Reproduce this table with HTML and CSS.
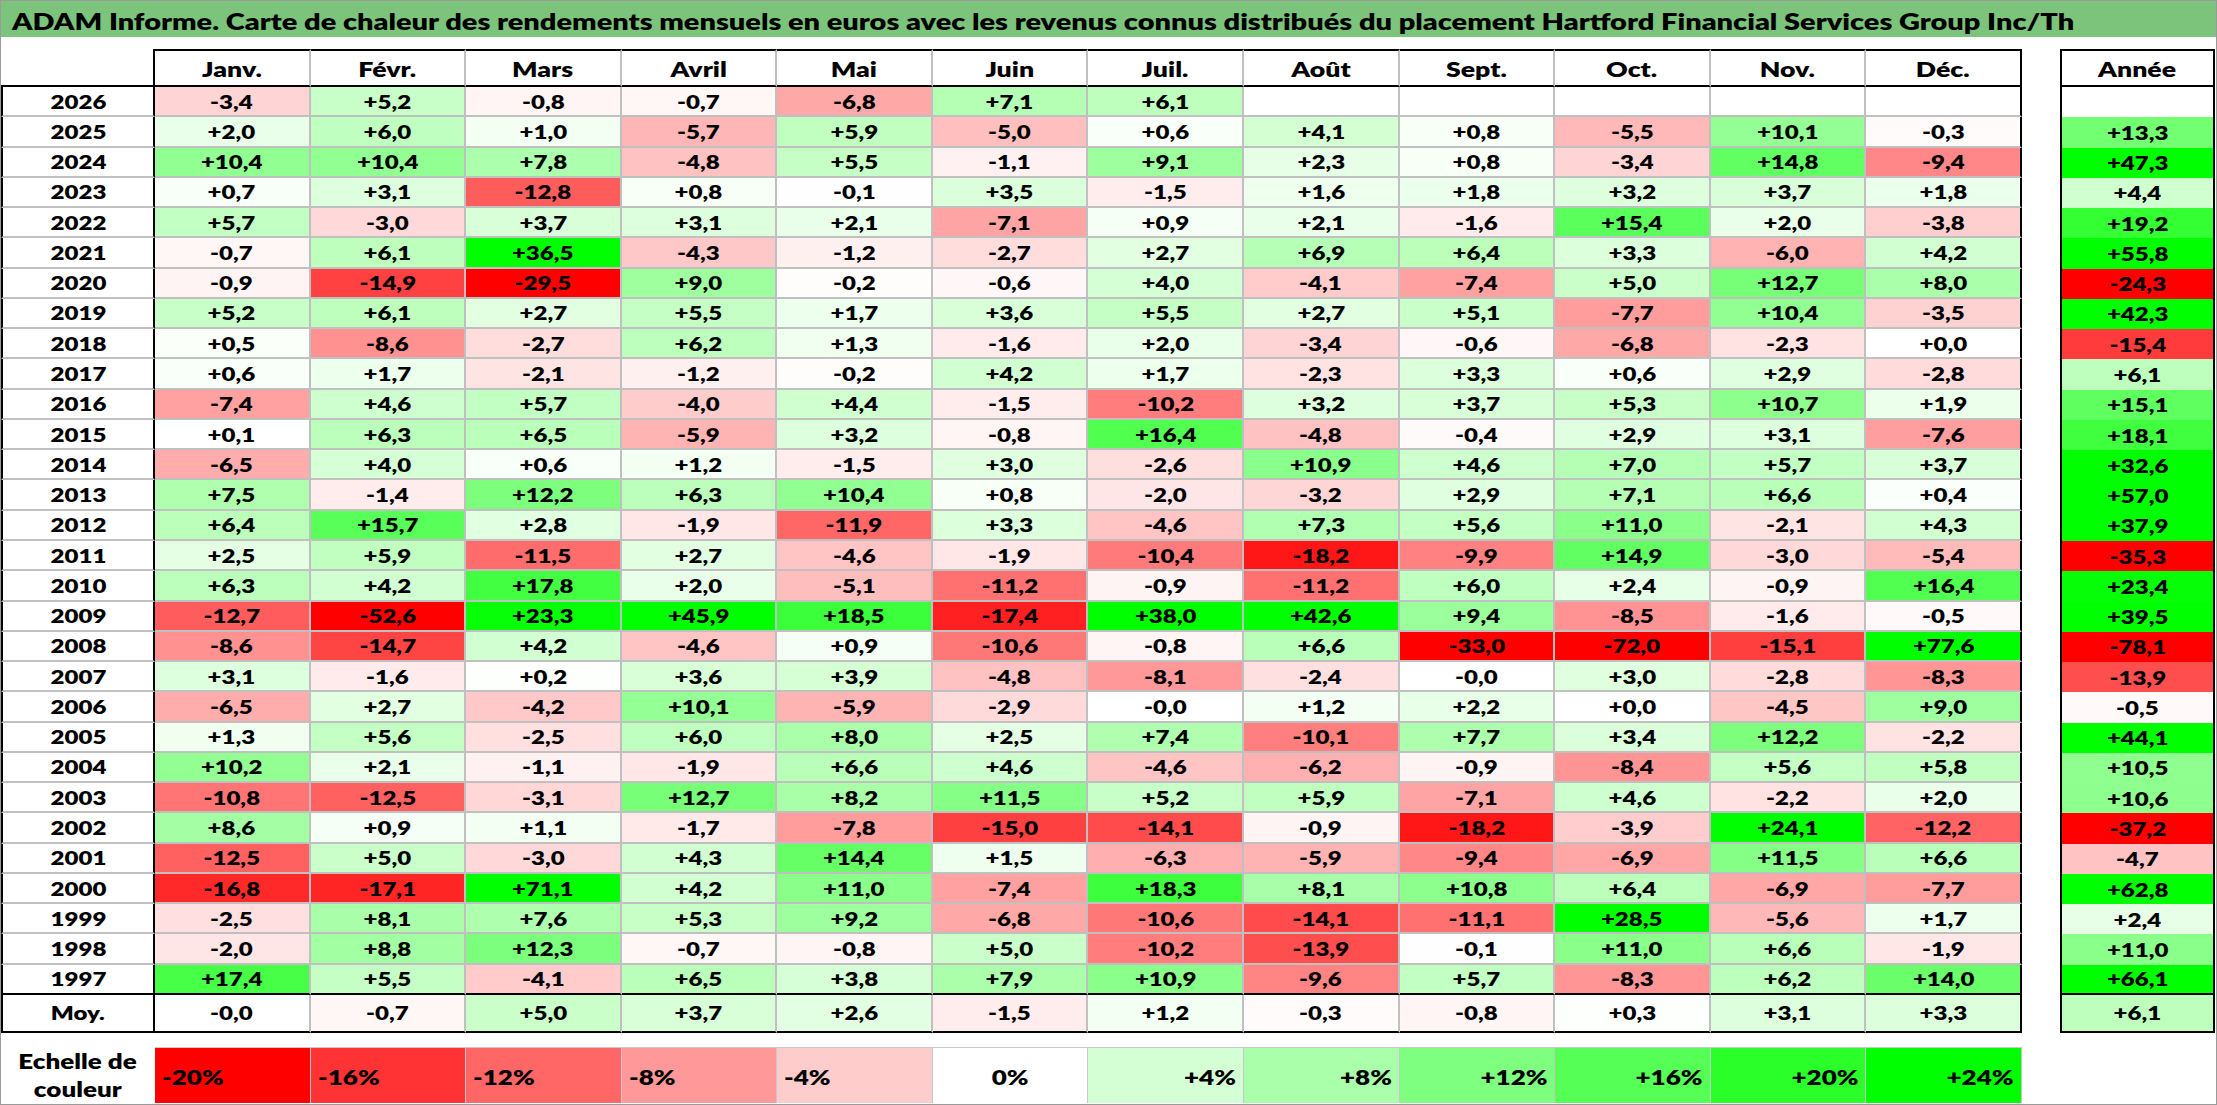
FILE: index.html
```html
<!DOCTYPE html>
<html lang="fr">
<head>
<meta charset="utf-8">
<title>ADAM Informe - Carte de chaleur</title>
<link rel="stylesheet" href="styles.css">
</head>
<body>
<div class="page">
  <div class="title"><span>ADAM Informe. Carte de chaleur des rendements mensuels en euros avec les revenus connus distribués du placement Hartford Financial Services Group Inc/Th</span></div>
  <div class="main">
    <div class="heat" id="heat"></div>
    <div class="annee" id="annee"></div>
  </div>
  <div class="legend">
    <div class="lg-label"><span>Echelle de</span><span>couleur</span></div>
    <div class="lg neg l-20"><span>-20%</span></div>
    <div class="lg neg l-16"><span>-16%</span></div>
    <div class="lg neg l-12"><span>-12%</span></div>
    <div class="lg neg l-8"><span>-8%</span></div>
    <div class="lg neg l-4"><span>-4%</span></div>
    <div class="lg zero l0"><span>0%</span></div>
    <div class="lg pos l4"><span>+4%</span></div>
    <div class="lg pos l8"><span>+8%</span></div>
    <div class="lg pos l12"><span>+12%</span></div>
    <div class="lg pos l16"><span>+16%</span></div>
    <div class="lg pos l20"><span>+20%</span></div>
    <div class="lg pos l24"><span>+24%</span></div>
  </div>
</div>
<script src="script.js"></script>
</body>
</html>
```

FILE: styles.css
```css
* { box-sizing: border-box; }
html, body { margin: 0; padding: 0; background: #fff; }
body {
  font-family: Lato, "Open Sans", "Liberation Sans", sans-serif;
  font-weight: 800;
  color: #000;
}
.page {
  width: 2217px;
  height: 1105px;
  border: 1px solid #9a9a9a;
  display: flex;
  flex-direction: column;
  overflow: hidden;
}
.title {
  flex: none;
  height: 36px;
  background: #7cc47c;
  font-size: 22px;
  line-height: 31px;
  padding: 5px 0 0 11px;
  white-space: nowrap;
}
.title span {
  display: inline-block;
  transform-origin: left center;
  transform: scaleX(1.315);
}
.main {
  flex: none;
  display: flex;
  gap: 38px;
  margin-top: 12px;
  height: 984px;
}
.heat {
  width: 2021px;
  display: grid;
  grid-template-columns: 154px repeat(12, 1fr);
  grid-template-rows: 38px repeat(30, 1fr) 38px;
}
.annee {
  width: 155px;
  display: grid;
  grid-template-columns: 1fr;
  grid-template-rows: 38px repeat(30, 1fr) 38px;
}
.cell {
  display: flex;
  align-items: center;
  justify-content: center;
  font-size: 18.5px;
  padding-top: 1px;
  border-right: 2px solid #c0c0c0;
  border-bottom: 2px solid #c0c0c0;
  white-space: nowrap;
  min-width: 0;
}
.cell span {
  display: inline-block;
  transform: scaleX(1.3);
}
.corner {
  border-right: 2px solid #000;
  border-bottom: 2px solid #000;
}
.mh {
  font-size: 20.5px;
  border-top: 2px solid #000;
  border-bottom: 2px solid #000;
}
.mh.end, .c.end { border-right-color: #000; }
.yr {
  border-left: 2px solid #000;
  border-right: 2px solid #000;
}
.blk { border-bottom-color: #000; }
.moy { border-bottom-color: #000; }
.ah {
  font-size: 20.5px;
  border: 2px solid #000;
}
.ac {
  border-left: 2px solid #000;
  border-right: 2px solid #000;
  border-bottom: 0;
}
.ac.blk, .ac.moy { border-bottom: 2px solid #000; }

.legend {
  flex: none;
  margin-top: 14px;
  width: 2021px;
  height: 56px;
  display: grid;
  grid-template-columns: 154px repeat(12, 1fr);
}
.lg-label {
  display: flex;
  flex-direction: column;
  align-items: center;
  justify-content: center;
  font-size: 20px;
  line-height: 28px;
}
.lg-label span {
  display: inline-block;
  transform: scaleX(1.3);
}
.lg {
  display: flex;
  align-items: center;
  font-size: 20px;
  padding: 2px 7px 0;
  border-top: 1px solid #c8c8c8;
  border-right: 1px solid #c8c8c8;
  min-width: 0;
}
.lg span { display: inline-block; transform: scaleX(1.3); }
.lg.neg { justify-content: flex-start; }
.lg.neg span { transform-origin: left center; }
.lg.zero { justify-content: center; }
.lg.pos { justify-content: flex-end; }
.lg.pos span { transform-origin: right center; }
.l-20 { background: #ff0000; }
.l-16 { background: #ff3333; }
.l-12 { background: #ff6666; }
.l-8 { background: #ff9999; }
.l-4 { background: #ffcccc; }
.l0 { background: #ffffff; }
.l4 { background: #d4ffd4; }
.l8 { background: #aaffaa; }
.l12 { background: #7fff7f; }
.l16 { background: #55ff55; }
.l20 { background: #2aff2a; }
.l24 { background: #00ff00; }
```

FILE: script.js
```js
(function () {
  var months = ["Janv.", "Févr.", "Mars", "Avril", "Mai", "Juin", "Juil.", "Août", "Sept.", "Oct.", "Nov.", "Déc."];
  var rows = [
    ["2026", "-3,4 +5,2 -0,8 -0,7 -6,8 +7,1 +6,1 . . . . . ."],
    ["2025", "+2,0 +6,0 +1,0 -5,7 +5,9 -5,0 +0,6 +4,1 +0,8 -5,5 +10,1 -0,3 +13,3"],
    ["2024", "+10,4 +10,4 +7,8 -4,8 +5,5 -1,1 +9,1 +2,3 +0,8 -3,4 +14,8 -9,4 +47,3"],
    ["2023", "+0,7 +3,1 -12,8 +0,8 -0,1 +3,5 -1,5 +1,6 +1,8 +3,2 +3,7 +1,8 +4,4"],
    ["2022", "+5,7 -3,0 +3,7 +3,1 +2,1 -7,1 +0,9 +2,1 -1,6 +15,4 +2,0 -3,8 +19,2"],
    ["2021", "-0,7 +6,1 +36,5 -4,3 -1,2 -2,7 +2,7 +6,9 +6,4 +3,3 -6,0 +4,2 +55,8"],
    ["2020", "-0,9 -14,9 -29,5 +9,0 -0,2 -0,6 +4,0 -4,1 -7,4 +5,0 +12,7 +8,0 -24,3"],
    ["2019", "+5,2 +6,1 +2,7 +5,5 +1,7 +3,6 +5,5 +2,7 +5,1 -7,7 +10,4 -3,5 +42,3"],
    ["2018", "+0,5 -8,6 -2,7 +6,2 +1,3 -1,6 +2,0 -3,4 -0,6 -6,8 -2,3 +0,0 -15,4"],
    ["2017", "+0,6 +1,7 -2,1 -1,2 -0,2 +4,2 +1,7 -2,3 +3,3 +0,6 +2,9 -2,8 +6,1"],
    ["2016", "-7,4 +4,6 +5,7 -4,0 +4,4 -1,5 -10,2 +3,2 +3,7 +5,3 +10,7 +1,9 +15,1"],
    ["2015", "+0,1 +6,3 +6,5 -5,9 +3,2 -0,8 +16,4 -4,8 -0,4 +2,9 +3,1 -7,6 +18,1"],
    ["2014", "-6,5 +4,0 +0,6 +1,2 -1,5 +3,0 -2,6 +10,9 +4,6 +7,0 +5,7 +3,7 +32,6"],
    ["2013", "+7,5 -1,4 +12,2 +6,3 +10,4 +0,8 -2,0 -3,2 +2,9 +7,1 +6,6 +0,4 +57,0"],
    ["2012", "+6,4 +15,7 +2,8 -1,9 -11,9 +3,3 -4,6 +7,3 +5,6 +11,0 -2,1 +4,3 +37,9"],
    ["2011", "+2,5 +5,9 -11,5 +2,7 -4,6 -1,9 -10,4 -18,2 -9,9 +14,9 -3,0 -5,4 -35,3"],
    ["2010", "+6,3 +4,2 +17,8 +2,0 -5,1 -11,2 -0,9 -11,2 +6,0 +2,4 -0,9 +16,4 +23,4"],
    ["2009", "-12,7 -52,6 +23,3 +45,9 +18,5 -17,4 +38,0 +42,6 +9,4 -8,5 -1,6 -0,5 +39,5"],
    ["2008", "-8,6 -14,7 +4,2 -4,6 +0,9 -10,6 -0,8 +6,6 -33,0 -72,0 -15,1 +77,6 -78,1"],
    ["2007", "+3,1 -1,6 +0,2 +3,6 +3,9 -4,8 -8,1 -2,4 -0,0 +3,0 -2,8 -8,3 -13,9"],
    ["2006", "-6,5 +2,7 -4,2 +10,1 -5,9 -2,9 -0,0 +1,2 +2,2 +0,0 -4,5 +9,0 -0,5"],
    ["2005", "+1,3 +5,6 -2,5 +6,0 +8,0 +2,5 +7,4 -10,1 +7,7 +3,4 +12,2 -2,2 +44,1"],
    ["2004", "+10,2 +2,1 -1,1 -1,9 +6,6 +4,6 -4,6 -6,2 -0,9 -8,4 +5,6 +5,8 +10,5"],
    ["2003", "-10,8 -12,5 -3,1 +12,7 +8,2 +11,5 +5,2 +5,9 -7,1 +4,6 -2,2 +2,0 +10,6"],
    ["2002", "+8,6 +0,9 +1,1 -1,7 -7,8 -15,0 -14,1 -0,9 -18,2 -3,9 +24,1 -12,2 -37,2"],
    ["2001", "-12,5 +5,0 -3,0 +4,3 +14,4 +1,5 -6,3 -5,9 -9,4 -6,9 +11,5 +6,6 -4,7"],
    ["2000", "-16,8 -17,1 +71,1 +4,2 +11,0 -7,4 +18,3 +8,1 +10,8 +6,4 -6,9 -7,7 +62,8"],
    ["1999", "-2,5 +8,1 +7,6 +5,3 +9,2 -6,8 -10,6 -14,1 -11,1 +28,5 -5,6 +1,7 +2,4"],
    ["1998", "-2,0 +8,8 +12,3 -0,7 -0,8 +5,0 -10,2 -13,9 -0,1 +11,0 +6,6 -1,9 +11,0"],
    ["1997", "+17,4 +5,5 -4,1 +6,5 +3,8 +7,9 +10,9 -9,6 +5,7 -8,3 +6,2 +14,0 +66,1"],
    ["Moy.", "-0,0 -0,7 +5,0 +3,7 +2,6 -1,5 +1,2 -0,3 -0,8 +0,3 +3,1 +3,3 +6,1"]
  ];

  function colour(s) {
    if (s === ".") return "#ffffff";
    var v = parseFloat(s.replace(",", "."));
    var c;
    if (v < 0) {
      c = Math.round(255 * (1 - Math.min(1, -v / 20)));
      return "rgb(255," + c + "," + c + ")";
    }
    c = Math.round(255 * (1 - Math.min(1, v / 24)));
    return "rgb(" + c + ",255," + c + ")";
  }

  function el(cls, txt, bg) {
    var d = document.createElement("div");
    d.className = cls;
    if (txt) {
      var s = document.createElement("span");
      s.textContent = txt;
      d.appendChild(s);
    }
    if (bg) d.style.background = bg;
    return d;
  }

  var heat = document.getElementById("heat");
  var ann = document.getElementById("annee");

  heat.appendChild(el("cell corner"));
  months.forEach(function (m, i) {
    heat.appendChild(el("cell mh" + (i === 11 ? " end" : ""), m));
  });
  ann.appendChild(el("cell ah", "Année"));

  rows.forEach(function (r, ri) {
    var vals = r[1].split(" ");
    var extra = "";
    if (ri === rows.length - 2) extra = " blk";
    if (ri === rows.length - 1) extra = " moy";
    heat.appendChild(el("cell yr" + extra, r[0]));
    for (var i = 0; i < 12; i++) {
      var v = vals[i];
      heat.appendChild(el("cell c" + (i === 11 ? " end" : "") + extra, v === "." ? "" : v, colour(v)));
    }
    var a = vals[12];
    ann.appendChild(el("cell ac" + extra, a === "." ? "" : a, colour(a)));
  });
})();
```
